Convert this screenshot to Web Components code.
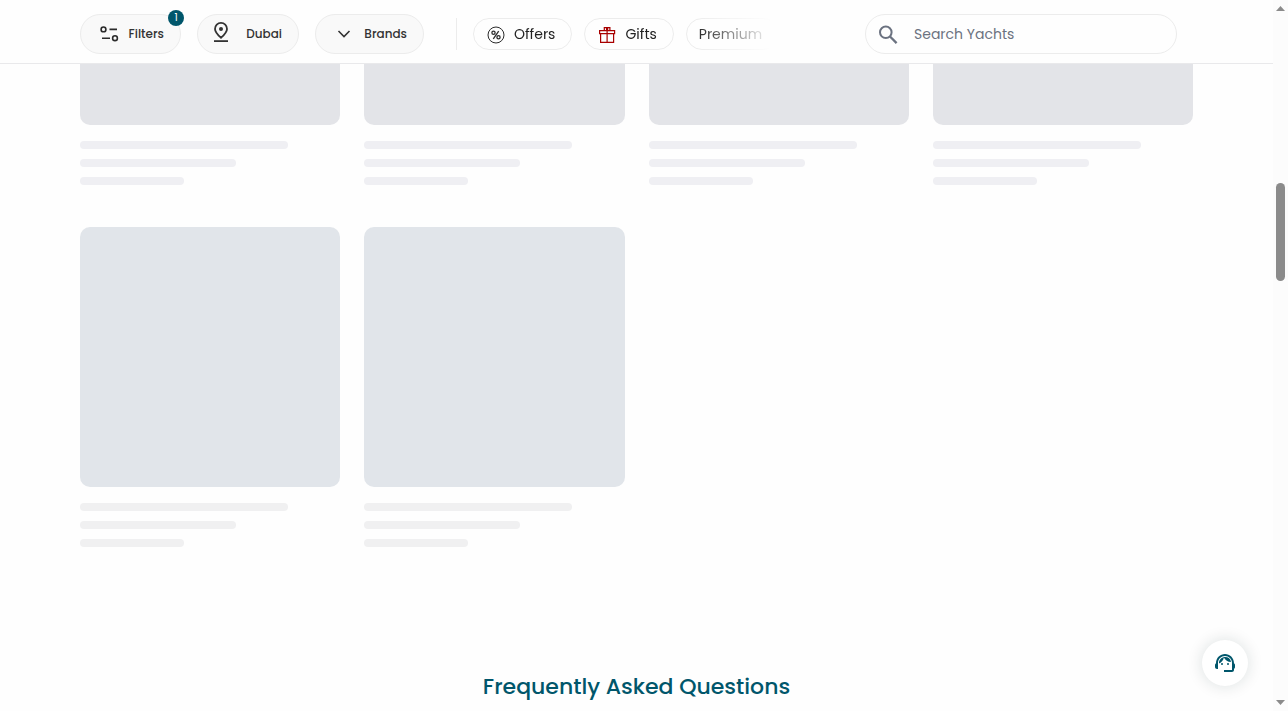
<!DOCTYPE html>
<html lang="en">
<head>
<meta charset="utf-8">
<meta name="viewport" content="width=device-width, initial-scale=1">
<title>Yachts in Dubai</title>
<style>
  body { margin: 0; background: #fefefe; font-family: Poppins, Inter, sans-serif; color: #2f2f2f; }
</style>
</head>
<body>
<yacht-page></yacht-page>
<script>
const define = (name, html) => {
  const tpl = document.createElement('template');
  tpl.innerHTML = '<style>:host,*{box-sizing:border-box}</style>' + html;
  customElements.define(name, class extends HTMLElement {
    constructor() {
      super();
      this.attachShadow({ mode: 'open' }).append(tpl.content.cloneNode(true));
    }
  });
};

define('filter-pill', `
<style>
  :host { display: block; flex: none; position: relative; width: var(--pill-width, 102px); }
  button { width: 100%; height: 40px; padding: 0 16px; display: flex; align-items: center; justify-content: space-between;
    border: 1px solid #ececec; border-radius: 20px; background: #f9f9f9; color: #333; font: 500 12px/18px Poppins, Inter, sans-serif; }
  ::slotted(svg) { display: block; }
</style>
<button type="button"><slot name="icon"></slot><slot></slot></button><slot name="badge"></slot>`);

define('count-badge', `
<style>
  :host { display: block; position: absolute; top: -4px; right: -3px; width: 16px; height: 16px; border-radius: 8px;
    background: #00566b; color: #fff; font-size: 10px; line-height: 16px; text-align: center; }
</style><slot></slot>`);

define('tag-chip', `
<style>
  :host { display: block; flex: none; }
  button { height: 32px; padding: 0 16px 0 12px; display: flex; align-items: center; gap: 8px; border: 1px solid #ececec;
    border-radius: 16px; background: #fefefe; color: #222; font: 400 14px/20px Poppins, Inter, sans-serif; }
  ::slotted(svg) { display: block; }
</style>
<button type="button"><slot name="icon"></slot><slot></slot></button>`);

define('search-box', `
<style>
  :host { display: block; flex: 0 1 312px; min-width: 0; margin-left: auto; }
  label { display: flex; align-items: center; gap: 16px; height: 40px; padding: 0 16px 0 12px; border: 1px solid #ececec;
    border-radius: 20px; background: #fefefe; }
  input { flex: 1; min-width: 0; border: 0; padding: 0; outline: 0; background: none; color: #6b7280; font: 400 14px/20px Poppins, Inter, sans-serif; }
  input::placeholder { color: #6b7280; opacity: 1; }
  svg { flex: none; display: block; }
</style>
<label><svg width="20" height="20" viewBox="0 0 20 20" fill="none" stroke="#6b7280" stroke-width="2"><circle cx="7.800" cy="8.300" r="5.800"/><path d="M12 12.500l6.600 6.600" stroke-width="2.300"/></svg>
<input type="search" placeholder="Search Yachts" aria-label="Search Yachts"></label>`);

define('top-bar', `
<style>
  :host { display: flex; align-items: center; height: 64px; padding: 4px 96px 0 80px; border-bottom: 1px solid #e9e9eb; background: #fefefe; }
  .pills { display: flex; gap: 16px; padding-right: 32px; }
  .rule { flex: none; width: 1px; height: 32px; margin-right: 16px; background: #ececec; }
  .chips { flex: 0 1 300px; min-width: 0; display: flex; gap: 12px; overflow: hidden;
    -webkit-mask-image: linear-gradient(to right, #000 74%, transparent); mask-image: linear-gradient(to right, #000 74%, transparent); }
  .wide { --pill-width: 109px; }
  .first { --pill-width: 101px; }
</style>
<div class="pills">
  <filter-pill class="first">
    <svg slot="icon" width="24" height="20" viewBox="0 0 24 20" fill="none" stroke="#2b2b2b" stroke-width="1.600"><circle cx="6.500" cy="5.400" r="2.400"/><path d="M12.500 5.400h7.500M5 14.200h8"/><circle cx="18" cy="14.200" r="2.400"/></svg>
    Filters<count-badge slot="badge">1</count-badge>
  </filter-pill>
  <filter-pill>
    <svg slot="icon" width="16" height="24" viewBox="0 0 16 24" fill="none" stroke="#333" stroke-width="1.800"><path d="M7 15.800C3.700 12.700 1 10.200 1 6.900a6 6 0 0 1 12 0C13 10.200 10.300 12.700 7 15.800z"/><circle cx="7" cy="7" r="2" fill="#333" stroke="none"/><path d="M0 19.100h14"/></svg>
    Dubai
  </filter-pill>
  <filter-pill class="wide">
    <svg slot="icon" width="24" height="20" viewBox="0 0 24 20" fill="none" stroke="#333" stroke-width="1.600"><path d="M6.500 7l5.500 5.500L17.500 7"/></svg>
    Brands
  </filter-pill>
</div>
<div class="rule"></div>
<div class="chips">
  <tag-chip><svg slot="icon" width="20" height="20" viewBox="0 0 20 20" fill="none" stroke="#2b2b2b"><circle cx="10" cy="11" r="8"/><circle cx="7.500" cy="8.800" r="1.600" stroke-width="1.300"/><circle cx="12.500" cy="13.200" r="1.600" stroke-width="1.300"/><path d="M12.700 7.200l-5.400 7.600" stroke-width="1.300"/></svg>Offers</tag-chip>
  <tag-chip><svg slot="icon" width="20" height="20" viewBox="0 0 20 20" fill="none" stroke="#a80000" stroke-width="1.200"><path d="M2.600 6.600h15v3h-15zM3.600 9.600h13v8.800h-13zM10.100 6.600v11.800"/><path d="M9.600 6.300V3.700H7.300v2.600M10.600 6.300V3.700h2.300v2.600"/></svg>Gifts</tag-chip>
  <tag-chip>Premium</tag-chip>
</div>
<search-box></search-box>`);

define('skeleton-card', `
<style>
  :host { display: grid; gap: 10px; --line: #efeff3; }
  :host([cut]) .photo { aspect-ratio: auto; height: 61px; border-radius: 0 0 10px 10px; background: #e3e4e8; }
  :host(:not([cut])) { --line: #f0f0f1; }
  .photo { aspect-ratio: 1; border-radius: 10px; background: #e1e5ea; margin-bottom: 6px; }
  .line { height: 8px; border-radius: 4px; background: var(--line); width: 80%; }
  .mid { width: 60%; }
  .short { width: 40%; }
</style>
<div class="photo"></div><div class="line"></div><div class="line mid"></div><div class="line short"></div>`);

define('card-grid', `
<style>
  :host { display: grid; grid-template-columns: repeat(4, minmax(0, 1fr)); gap: 42px 24px; padding: 0 80px; }
</style><slot></slot>`);

define('scroll-rail', `
<style>
  :host { display: flex; flex-direction: column; align-items: center; background: #fcfcfc; padding: 6px 0; }
  i { width: 9px; height: 5px; background: #8b8b8b; clip-path: polygon(50% 0, 100% 100%, 0 100%); }
  i:last-child { clip-path: polygon(0 0, 100% 0, 50% 100%); }
  .before { flex: 172; }
  .thumb { flex: 98; width: 9px; border-radius: 5px; background: #8b8b8b; }
  .after { flex: 419; }
</style>
<i></i><div class="before"></div><div class="thumb"></div><div class="after"></div><i></i>`);

define('support-button', `
<style>
  :host { display: block; position: fixed; right: 40px; bottom: 25px; }
  button { display: grid; place-items: center; width: 46px; height: 46px; padding: 0; border: 0; border-radius: 23px; background: #fff;
    box-shadow: 0 0 16px rgba(0, 40, 40, .14); }
</style>
<button type="button" aria-label="Customer support">
  <svg width="24" height="24" viewBox="0 0 24 24" fill="#00566b"><path d="M21 12.220C21 6.730 16.740 3 12 3c-4.690 0-9 3.650-9 9.280-.6.340-1 .980-1 1.720v2c0 1.100.9 2 2 2h1v-6.100c0-3.870 3.130-7 7-7s7 3.130 7 7V19h-8v2h8c1.100 0 2-.9 2-2v-1.220c.590-.310 1-.920 1-1.640v-2.300c0-.7-.410-1.310-1-1.620z"/><circle cx="9" cy="13" r="1"/><circle cx="15" cy="13" r="1"/><path d="M18 11.030A6.040 6.040 0 0 0 12.050 6c-3.030 0-6.290 2.510-6.030 6.450a8.075 8.075 0 0 0 4.860-5.890c1.310 2.630 4 4.440 7.120 4.470z"/></svg>
</button>`);

define('yacht-page', `
<style>
  :host { display: grid; grid-template-columns: minmax(0, 1fr) 15px; height: 100vh; overflow: hidden; }
  h2 { margin: 120px 0 0; color: #00566b; font-size: 22px; line-height: 40px; font-weight: 500; text-align: center; }
</style>
<main>
  <top-bar></top-bar>
  <card-grid>
    <skeleton-card cut></skeleton-card><skeleton-card cut></skeleton-card><skeleton-card cut></skeleton-card><skeleton-card cut></skeleton-card>
    <skeleton-card></skeleton-card><skeleton-card></skeleton-card>
  </card-grid>
  <h2>Frequently Asked Questions</h2>
</main>
<scroll-rail></scroll-rail>
<support-button></support-button>`);
</script>
</body>
</html>
